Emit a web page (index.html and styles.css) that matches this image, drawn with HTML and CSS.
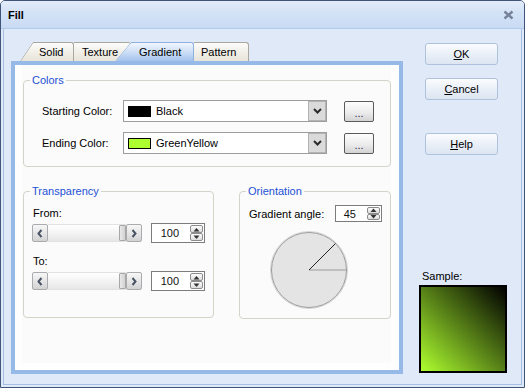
FILE: index.html
```html
<!DOCTYPE html>
<html>
<head>
<meta charset="utf-8">
<title>Fill</title>
<link rel="stylesheet" href="styles.css">
</head>
<body>
<div class="window">
    <div class="titlebar">
        <span class="title">Fill</span>
        <svg class="close" width="11" height="10" viewBox="0 0 11 10"><path d="M1.5 1.5 L9.5 8.5 M9.5 1.5 L1.5 8.5" stroke="#76839a" stroke-width="2.4" fill="none"/></svg>
    </div>
    <div class="body">
        <div class="left">
            <div class="tabs">
                <div class="tab slant t-solid">Solid</div>
                <div class="tab t-texture">Texture</div>
                <div class="tab slant active t-gradient">Gradient</div>
                <div class="tab t-pattern">Pattern</div>
            </div>
            <div class="panel">
                <div class="panel-inner">
                    <fieldset class="group colors">
                        <legend>Colors</legend>
                        <div class="color-row">
                            <span class="lbl">Starting Color:</span>
                            <div class="combo">
                                <span class="swatch" style="background:#000000"></span>
                                <span class="ctext">Black</span>
                                <span class="drop"><svg width="9" height="6" viewBox="0 0 9 6"><path d="M1 1 L4.5 4.5 L8 1" stroke="#2b2b2b" stroke-width="2" fill="none"/></svg></span>
                            </div>
                            <button class="dots">...</button>
                        </div>
                        <div class="color-row">
                            <span class="lbl">Ending Color:</span>
                            <div class="combo">
                                <span class="swatch" style="background:#adff2f"></span>
                                <span class="ctext">GreenYellow</span>
                                <span class="drop"><svg width="9" height="6" viewBox="0 0 9 6"><path d="M1 1 L4.5 4.5 L8 1" stroke="#2b2b2b" stroke-width="2" fill="none"/></svg></span>
                            </div>
                            <button class="dots">...</button>
                        </div>
                    </fieldset>
                    <div class="lower">
                        <fieldset class="group transp">
                            <legend>Transparency</legend>
                            <div class="fld-lbl">From:</div>
                            <div class="slide-row">
                                <div class="slider">
                                    <span class="sl-btn"><svg width="6" height="9" viewBox="0 0 6 9"><path d="M4.5 1 L1.5 4.5 L4.5 8" stroke="#4a5464" stroke-width="2" fill="none"/></svg></span>
                                    <span class="track"><span class="thumb"></span></span>
                                    <span class="sl-btn"><svg width="6" height="9" viewBox="0 0 6 9"><path d="M1.5 1 L4.5 4.5 L1.5 8" stroke="#4a5464" stroke-width="2" fill="none"/></svg></span>
                                </div>
                                <div class="spin wide">
                                    <span class="spin-val">100</span>
                                    <span class="spin-btns">
                                        <span class="sb"><svg width="7" height="5" viewBox="0 0 7 5"><path d="M0.5 4.5 L3.5 1 L6.5 4.5 Z" fill="#333"/></svg></span>
                                        <span class="sb"><svg width="7" height="5" viewBox="0 0 7 5"><path d="M0.5 0.5 L3.5 4 L6.5 0.5 Z" fill="#333"/></svg></span>
                                    </span>
                                </div>
                            </div>
                            <div class="fld-lbl second">To:</div>
                            <div class="slide-row">
                                <div class="slider">
                                    <span class="sl-btn"><svg width="6" height="9" viewBox="0 0 6 9"><path d="M4.5 1 L1.5 4.5 L4.5 8" stroke="#4a5464" stroke-width="2" fill="none"/></svg></span>
                                    <span class="track"><span class="thumb"></span></span>
                                    <span class="sl-btn"><svg width="6" height="9" viewBox="0 0 6 9"><path d="M1.5 1 L4.5 4.5 L1.5 8" stroke="#4a5464" stroke-width="2" fill="none"/></svg></span>
                                </div>
                                <div class="spin wide">
                                    <span class="spin-val">100</span>
                                    <span class="spin-btns">
                                        <span class="sb"><svg width="7" height="5" viewBox="0 0 7 5"><path d="M0.5 4.5 L3.5 1 L6.5 4.5 Z" fill="#333"/></svg></span>
                                        <span class="sb"><svg width="7" height="5" viewBox="0 0 7 5"><path d="M0.5 0.5 L3.5 4 L6.5 0.5 Z" fill="#333"/></svg></span>
                                    </span>
                                </div>
                            </div>
                        </fieldset>
                        <fieldset class="group orient">
                            <legend>Orientation</legend>
                            <div class="angle-row">
                                <span>Gradient angle:</span>
                                <div class="spin narrow">
                                    <span class="spin-val">45</span>
                                    <span class="spin-btns">
                                        <span class="sb"><svg width="7" height="4" viewBox="0 0 7 4"><path d="M0.5 4 L3.5 0.5 L6.5 4 Z" fill="#333"/></svg></span>
                                        <span class="sb"><svg width="7" height="4" viewBox="0 0 7 4"><path d="M0.5 0 L3.5 3.5 L6.5 0 Z" fill="#333"/></svg></span>
                                    </span>
                                </div>
                            </div>
                            <svg class="dial" width="80" height="80" viewBox="0 0 80 80">
                                <circle cx="40" cy="40" r="38.5" fill="none" stroke="#d6d6d6" stroke-width="1"/>
                                <circle cx="40" cy="40" r="37.5" fill="#e4e4e4" stroke="#9c9c9c" stroke-width="1"/>
                                <line x1="40" y1="40" x2="77.5" y2="40" stroke="#9a9a9a" stroke-width="1"/>
                                <line x1="40" y1="40" x2="66.5" y2="13.5" stroke="#222" stroke-width="1"/>
                            </svg>
                        </fieldset>
                    </div>
                </div>
            </div>
        </div>
        <div class="right">
            <button class="btn"><u>O</u>K</button>
            <button class="btn"><u>C</u>ancel</button>
            <button class="btn help"><u>H</u>elp</button>
            <div class="sample">
                <div class="sample-lbl">Sample:</div>
                <div class="sample-box"></div>
            </div>
        </div>
    </div>
</div>
</body>
</html>
```
FILE: styles.css
```css
*{
    margin: 0;
    padding: 0;
    box-sizing: border-box;
}
body{
    font-family: "Liberation Sans", Arial, sans-serif;
    font-size: 11px;
    color: #000;
    background: #fff;
}
.window{
    width: 525px;
    height: 388px;
    border: 1px solid #3e5579;
    border-radius: 5px 5px 0 0;
    background: #dfe9f8;
    display: flex;
    flex-direction: column;
    overflow: hidden;
}
.titlebar{
    height: 28px;
    flex: none;
    display: flex;
    align-items: center;
    justify-content: space-between;
    padding: 0 10px 0 7px;
    background: linear-gradient(#e3ecf9, #d3e2f6 45%, #c9dbf4);
    border-bottom: 1px solid #b3cbeb;
}
.title{
    font-weight: bold;
}
.body{
    flex: 1;
    display: flex;
    margin: 0 2px 2px;
    border: 1px solid #a6bfe3;
    border-top: none;
}
.left{
    width: 399px;
    flex: none;
    padding: 13px 0 0 7px;
}

/* tabs */
.tabs{
    display: flex;
    height: 19px;
    padding-left: 22px;
}
.tab{
    position: relative;
    z-index: 1;
    height: 19px;
    line-height: 18px;
    border-top: 1px solid #aaa89e;
    border-right: 1px solid #aaa89e;
    border-top-right-radius: 3px;
    background: linear-gradient(#fcfcfa, #f1efe8 50%, #e7e4da);
    white-space: nowrap;
}
.tab.slant::before{
    content: "";
    position: absolute;
    z-index: -1;
    top: -1px;
    bottom: 0;
    left: -13px;
    width: 24px;
    border-top: 1px solid #aaa89e;
    border-left: 1px solid #aaa89e;
    border-top-left-radius: 2px;
    background: inherit;
    transform: skewX(-34deg);
    transform-origin: bottom left;
}
.t-solid{ width: 41px; padding-left: 6px; }
.t-texture{ width: 57px; padding-left: 8px; border-right: none; }
.t-gradient{ width: 63px; padding-left: 8px; }
.t-pattern{ width: 55px; padding-left: 7px; }
.tab.active{
    z-index: 3;
    border-color: #8fb1e0;
    background: linear-gradient(#f2f6fd, #cddff6 50%, #a3c2ec);
}
.tab.active::before{
    left: -16px;
    border-color: #8fb1e0;
    transform: skewX(-40deg);
}

/* panel */
.panel{
    width: 392px;
    height: 313px;
    border: 4px solid #97b9e8;
    background: #fefefe;
    padding: 0 8px 7px 7px;
}
.panel-inner{
    height: 100%;
    background: #fbfbfb;
    padding: 8px 0 0 1px;
}
.group{
    border: 1px solid #d3d3c8;
    border-radius: 4px;
    padding: 0 8px 0 6px;
    min-width: 0;
}
.group legend{
    color: #2451d6;
    padding: 0 2px;
    line-height: 14px;
}
.colors{
    padding-bottom: 12px;
}
.color-row{
    display: flex;
    align-items: center;
    margin: 13px 0 0 12px;
}
.color-row + .color-row{
    margin-top: 10px;
}
.lbl{
    width: 81px;
}
.combo{
    width: 204px;
    height: 22px;
    border: 1px solid #9d9d9d;
    background: #fff;
    display: flex;
    align-items: center;
    padding-left: 4px;
}
.swatch{
    width: 23px;
    height: 11px;
    border: 1px solid #000;
}
.ctext{
    flex: 1;
    margin-left: 5px;
}
.drop{
    width: 18px;
    height: 20px;
    border: 1px solid #b3b3b3;
    background: #dadada;
    display: flex;
    align-items: center;
    justify-content: center;
}
.dots{
    width: 30px;
    height: 21px;
    margin-left: 17px;
    border: 1px solid #5a5a5a;
    border-radius: 2px;
    background: linear-gradient(#fdfdfd, #ececec 55%, #d3d3d3);
    font-family: inherit;
    font-size: 11px;
    color: #2c2a5a;
    line-height: 19px;
    padding-top: 2px;
}

.lower{
    display: flex;
    gap: 25px;
    margin-top: 17px;
}
.transp{
    width: 191px;
    height: 134px;
}
.orient{
    width: 152px;
    height: 135px;
}
.fld-lbl{
    margin: 9px 0 3px 3px;
    line-height: 13px;
}
.fld-lbl.second{
    margin-top: 12px;
}
.slide-row{
    display: flex;
    align-items: center;
    gap: 9px;
    margin-left: 2px;
}
.slider{
    width: 111px;
    height: 18px;
    display: flex;
}
.sl-btn{
    width: 16px;
    border: 1px solid #a9abae;
    border-radius: 2px;
    background: linear-gradient(#f7f7f7, #e4e4e4 55%, #d2d2d2);
    display: flex;
    align-items: center;
    justify-content: center;
}
.track{
    flex: 1;
    display: flex;
    justify-content: flex-end;
    background: linear-gradient(#ffffff, #f1f1f1 60%, #e6e6e6);
    border-top: 1px solid #e2e2e2;
    border-bottom: 1px solid #e2e2e2;
}
.thumb{
    width: 7px;
    border: 1px solid #a7a7a7;
    border-radius: 1px;
    background: linear-gradient(90deg, #e9e9e9, #d2d2d2);
}
.spin{
    height: 20px;
    border: 1px solid #7c7c7c;
    background: #fff;
    display: flex;
    align-items: center;
}
.spin.wide{ width: 55px; }
.spin.narrow{ width: 47px; height: 17px; }
.spin-val{
    flex: 1;
    text-align: right;
    padding-right: 11px;
    color: #111;
}
.spin-btns{
    width: 13px;
    height: 100%;
    display: flex;
    flex-direction: column;
    margin-right: 1px;
    padding: 1px 0;
}
.sb{
    flex: 1;
    border: 1px solid #8c8c8c;
    border-radius: 2px;
    background: linear-gradient(#fdfdfd, #dcdcdc);
    display: flex;
    align-items: center;
    justify-content: center;
}
.angle-row{
    display: flex;
    align-items: center;
    justify-content: space-between;
    margin: 7px 0 0 3px;
}
.dial{
    display: block;
    margin: 8px 0 0 23px;
}

/* right column */
.right{
    flex: 1;
    display: flex;
    flex-direction: column;
    align-items: flex-start;
    padding: 14px 0 0 16px;
}
.btn{
    width: 73px;
    height: 22px;
    margin-left: 6px;
    border: 1px solid #afc2dc;
    border-radius: 3px;
    background: linear-gradient(#fbfcfe, #eaf0f8 50%, #dce5f1);
    font-family: inherit;
    font-size: 11px;
    color: #000;
}
.btn + .btn{
    margin-top: 13px;
}
.btn.help{
    margin-top: 33px;
}
.sample{
    margin-top: 114px;
}
.sample-lbl{
    padding-left: 3px;
    line-height: 14px;
    margin-bottom: 2px;
}
.sample-box{
    width: 88px;
    height: 88px;
    border: 2px solid #000;
    background: linear-gradient(to top right, #adff2f, #000);
}
```
